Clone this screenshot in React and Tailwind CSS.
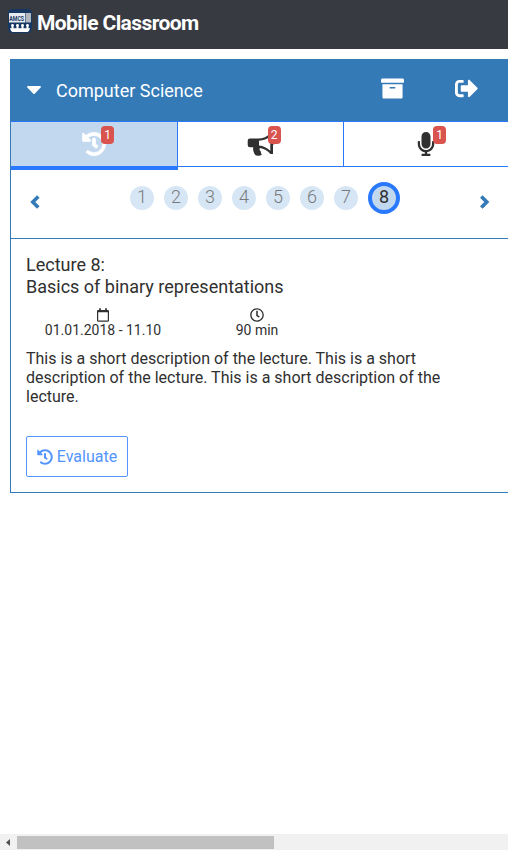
import React from "react";
import { FaHistory, FaMicrophone, FaArchive, FaCaretDown, FaSignOutAlt, FaRegClock } from "react-icons/fa";

function Logo() {
  return (
    <svg viewBox="0 0 24 24" className="w-6 h-6 shrink-0">
      <rect width="24" height="24" rx="4.5" fill="#173863" />
      <rect x="1" y="4" width="16" height="9.5" fill="#e6ebf0" />
      <rect x="17.5" y="4" width="5.5" height="9.5" fill="#b3b8bf" />
      <text x="1.3" y="11.5" fontSize="7.5" fontWeight="700" textLength="14.8" lengthAdjust="spacingAndGlyphs" fill="#173863" fontFamily="Roboto, sans-serif">AMCS</text>
      <g fill="#fff">
        <circle cx="4.5" cy="16.3" r="1.4" /><circle cx="9.5" cy="16.3" r="1.4" /><circle cx="14.5" cy="16.3" r="1.4" /><circle cx="19.5" cy="16.3" r="1.4" />
        <path d="M3.5 17h2v2.3h3V17h2v2.3h3V17h2v2.3h3V17h2v2.3H22l-1 2.7-1.5 1h-15L3 22l-1-2.7h1.5z" />
      </g>
    </svg>
  );
}

function Bullhorn() {
  return (
    <svg viewBox="0 0 28 24" className="w-7 h-6 shrink-0" fill="currentColor">
      <path fillRule="evenodd" d="M3 6.500h8.500c4.500 0 8.500-2 12-5H26v6.600a2.200 2.200 0 0 1 0 4.400V22h-2.500c-3-3.300-6.300-5.200-10.600-6-.7 1.400-.2 2.600 1.200 3.700-.6 1-.1 1.900.8 2.600-1.300 1.700-4.900 2-6.700.8C7 20.500 5.600 18.400 6.300 15.200H3A2.300 2.300 0 0 1 .7 12.900V8.800A2.300 2.300 0 0 1 3 6.500zM12 8.800v4.800c4.300.5 8 2.300 11.300 5.200V4.500C20.100 7 16.400 8.400 12 8.800z" />
    </svg>
  );
}

function Calendar() {
  return (
    <svg viewBox="0 0 14 14" className="w-[14px] h-[14px]" fill="none" stroke="currentColor">
      <rect x="1.600" y="2.600" width="10.800" height="10.600" rx=".8" strokeWidth="1.200" />
      <path d="M1 3.500h12M4 .3V3M10 .3V3" strokeWidth="1.700" />
    </svg>
  );
}

function Chevron({ right }) {
  return (
    <svg viewBox="0 0 16 16" className="w-4 h-4 mt-[27px]" fill="none" stroke="currentColor" strokeWidth="3.600">
      <path d={right ? "M5.300 2.500 10.800 8 5.300 13.500" : "M11.300 2.500 5.800 8 11.300 13.500"} />
    </svg>
  );
}

function Tab({ children, count, active, last }) {
  return (
    <div className={`flex justify-center pt-[10px] shrink-0 ${last ? "w-[164px]" : ""} ${active ? "w-[167px] bg-[#c2d8ee] text-white border-b-[#2979ff] border-b-4 border-r border-r-[#2979ff] h-[48px]" : "text-[#303030] border-b border-[#2979ff] h-[45px]"} ${!last && !active ? "w-[166px] border-r" : ""}`}>
      <div className="relative w-6 h-6 flex justify-center">
        {children}
        <span className="absolute left-[19px] -top-[6px] w-[13px] h-[18px] rounded bg-[#d9534f] text-white text-[12px] leading-[18px] text-center">{count}</span>
      </div>
    </div>
  );
}

export default function App() {
  return (
    <div className="w-[508px] h-[850px] overflow-hidden bg-white flex flex-col font-[Roboto,sans-serif] text-[#303030]">
      <header className="h-[49px] bg-[#373a41] flex items-start pl-2 pt-[9px] shrink-0">
        <Logo />
        <h1 className="ml-[5px] mt-[2px] text-[21px] leading-6 font-bold text-white tracking-[-0.6px]">Mobile Classroom</h1>
      </header>
      <main className="mt-[10px] ml-[10px] h-[434px] border-l border-b border-[#337ab7] flex flex-col shrink-0">
        <div className="h-[62px] bg-[#337ab7] text-white flex items-center">
          <FaCaretDown size={24} className="ml-[11px] mb-[2px]" />
          <span className="ml-[10px] text-[18px]">Computer Science</span>
          <FaArchive size={23} className="ml-auto mr-[51px] mb-[3px]" />
          <FaSignOutAlt size={23} className="mr-[30px] mb-[4px]" />
        </div>
        <div className="h-[46px] border-t border-[#2979ff] flex items-start shrink-0">
          <Tab count={1} active><FaHistory size={24} stroke="currentColor" strokeWidth={16} /></Tab>
          <Tab count={2}><Bullhorn /></Tab>
          <Tab count={1} last><FaMicrophone size={24} /></Tab>
        </div>
        <div className="h-[72px] border-b border-[#337ab7] flex items-start shrink-0 text-[#337ab7]">
          <div className="ml-4"><Chevron /></div>
          <div className="flex items-center gap-[10px] ml-[87px] mt-[15px] text-[18px] leading-[22px] text-center font-light">
            {[1, 2, 3, 4, 5, 6, 7].map((n) => (
              <span key={n} className="w-6 h-6 rounded-full bg-[#d7e6f4] text-[#777a7d]">{n}</span>
            ))}
            <span className="w-8 h-8 rounded-full border-4 border-[#2979ff] bg-[#c2d8ee] text-[#303030] font-normal">8</span>
          </div>
          <div className="ml-auto mr-4"><Chevron right /></div>
        </div>
        <section className="pl-[15px] pt-[15px]">
          <h2 className="text-[18px] leading-[22px]">Lecture 8:<br />Basics of binary representations</h2>
          <div className="flex mt-[10px] text-[14px] leading-4 text-center">
            <div className="w-[154px] flex flex-col items-center"><Calendar /><span>01.01.2018 - 11.10</span></div>
            <div className="w-[154px] flex flex-col items-center"><FaRegClock size={14} /><span>90 min</span></div>
          </div>
          <p className="mt-[11px] w-[450px] text-[16px] leading-[19px]">This is a short description of the lecture. This is a short<br />description of the lecture. This is a short description of the<br />lecture.</p>
          <button className="mt-[30px] w-[102px] h-[41px] border border-[#5394ff] rounded-[2px] flex items-center justify-center gap-1 text-[16px] text-[#5394ff]"><FaHistory size={16} />Evaluate</button>
        </section>
      </main>
      <div className="mt-auto h-4 bg-[#f1f1f1] flex items-center shrink-0">
        <svg className="w-[17px] h-4" viewBox="0 0 17 16"><path d="M10 5v7L6 8.5z" fill="#505050" /></svg>
        <div className="w-[257px] h-[13px] bg-[#c1c1c1]" />
      </div>
    </div>
  );
}
